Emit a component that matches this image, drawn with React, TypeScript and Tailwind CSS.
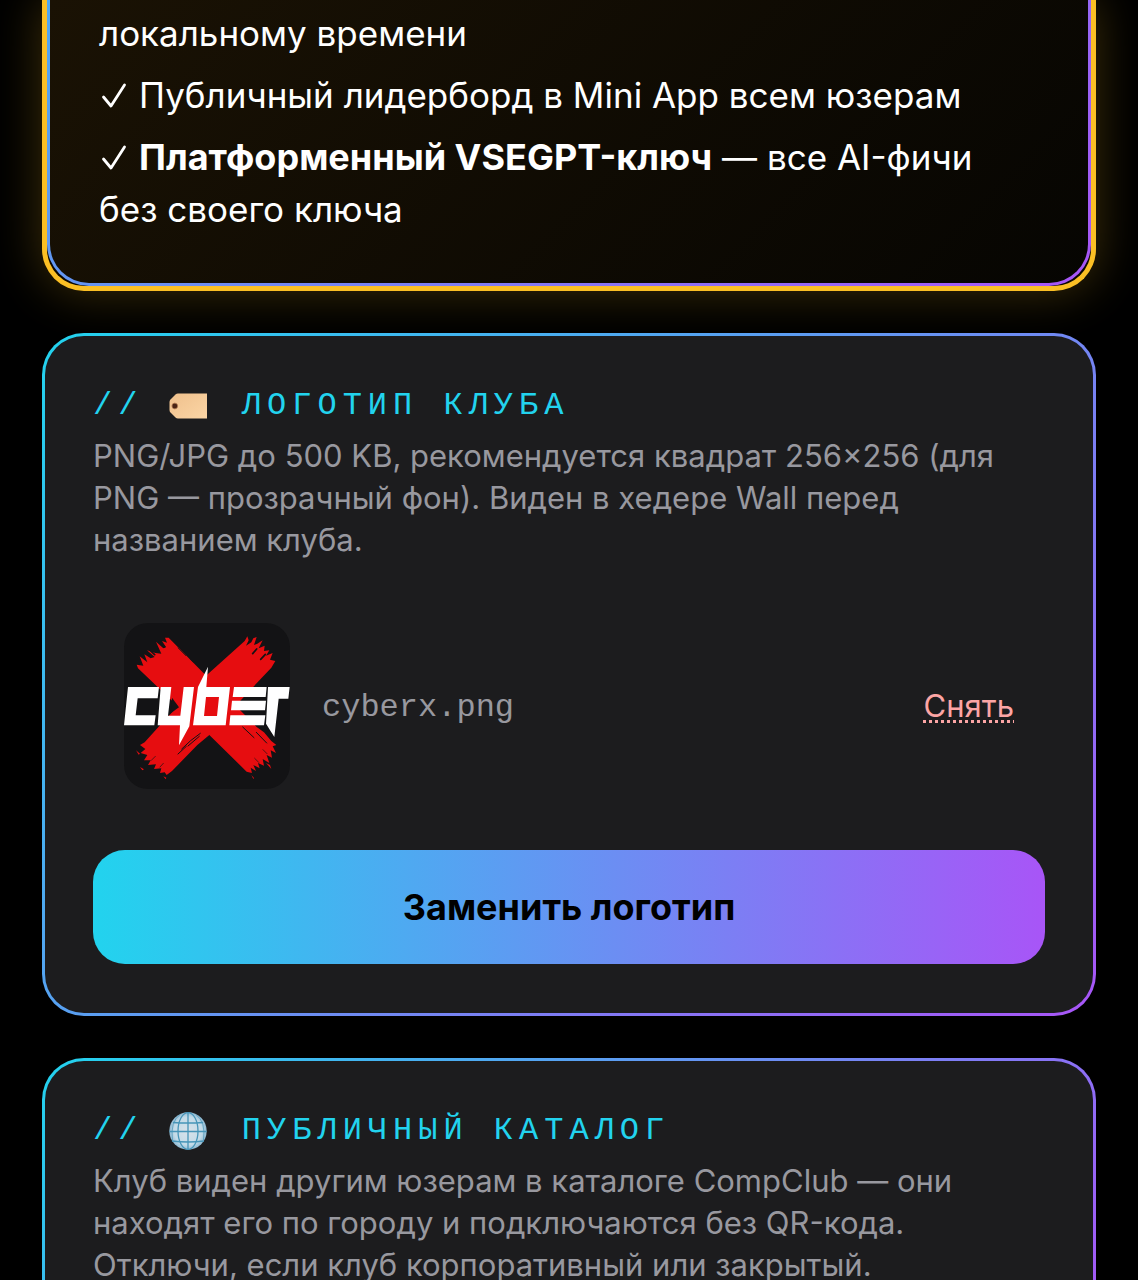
import { FC, ReactNode } from 'react';

const CheckIcon: FC = () => (
  <svg
    viewBox="0 0 28 28"
    className="mr-3 inline-block h-7 w-7 align-baseline"
    fill="none"
    stroke="currentColor"
    strokeWidth="2.8"
    strokeLinecap="round"
    strokeLinejoin="round"
    role="img"
    aria-label="✓"
  >
    <path d="M4.5 17 L12 26 L25.5 5" />
  </svg>
);

const TagIcon: FC = () => (
  <svg viewBox="0 0 38 38" className="h-[38px] w-[38px]" aria-hidden="true">
    <defs>
      <linearGradient id="tag" x1="0" y1="0" x2="1" y2="1">
        <stop offset="0" stopColor="#efc08c" />
        <stop offset="1" stopColor="#fbd5a5" />
      </linearGradient>
    </defs>
    <path
      d="M9 6.5 H38 V31.5 H9 Q7.5 31.5 6.5 30.5 L1.5 25.5 Q.5 24.5 .5 23 V15 Q.5 13.5 1.5 12.5 L6.5 7.5 Q7.5 6.5 9 6.5Z"
      fill="url(#tag)"
    />
    <circle cx="5.8" cy="19" r="2.7" fill="#4a2415" />
    <circle cx="5.8" cy="19" r="2.9" fill="none" stroke="#a9714b" strokeWidth=".7" />
  </svg>
);

const GlobeIcon: FC = () => (
  <svg viewBox="0 0 38 38" className="h-[38px] w-[38px]" aria-hidden="true">
    <defs>
      <radialGradient id="globe">
        <stop offset="0" stopColor="#d9e2ea" />
        <stop offset=".75" stopColor="#c3dbe8" />
        <stop offset="1" stopColor="#8fb9d2" />
      </radialGradient>
    </defs>
    <circle cx="19" cy="19" r="18.7" fill="url(#globe)" />
    <g fill="none" stroke="#4795b8" strokeWidth="1.3">
      <path d="M19 .5 V37.5 M.5 19.5 H37.5 M4 10.5 Q19 11.5 34 10.5 M3 29 Q19 31 35 29" />
      <ellipse cx="19" cy="19" rx="10" ry="18.3" />
      <path d="M11 2.5 Q1 10 3.5 28 M27 2.5 Q37 10 34.5 28" strokeWidth=".7" />
    </g>
  </svg>
);

const ClubLogo: FC = () => (
  <svg
    viewBox="42 38 498 498"
    className="h-[166px] w-[166px] shrink-0 rounded-3xl bg-[#131315]"
    role="img"
    aria-label="Cyber X"
  >
    <g fill="#e60d10">
      {/* brush stroke from top left to bottom right */}
      <path d="M176 82 L440 350 L462 366 L484 392 L499 404 L488 408 L498 428 L482 420 L486 442 L470 434 L478 458 L458 446 L462 466 L444 458 L449 474 L430 464 L438 482 L422 472 L426 488 L410 484 L298 374 L190 275 L84 174 L80 163 L100 166 L89 138 L112 156 L103 132 L122 144 L134 140 L111 120 L136 128 L154 130 L138 94 L160 114 L168 110 L156 92 L171 97 L165 82 Z" />
      {/* brush stroke from top right to bottom left */}
      <path d="M404 92 L412 78 L416 90 L408 106 L424 96 L430 84 L440 80 L432 104 L442 100 L458 90 L446 114 L464 106 L462 122 L478 120 L468 136 L488 128 L480 148 L496 152 L484 172 L391 271 L298 374 L262 404 L186 482 L170 494 L164 486 L150 488 L154 474 L132 476 L138 462 L114 464 L122 450 L102 450 L112 434 L92 428 L106 416 L90 404 L104 396 L150 345 L293 192 Z" />
      <path d="M90 470 l12 7 -5 3z M468 458 l16 18 -4 -12z M160 498 l9 4 -2 5z M424 494 l8 9 -2 3z M78 420 l12 10 -4 3z" />
    </g>
    <g stroke="#131315" strokeLinecap="round" fill="none">
      <path d="M148 94 L164 110 M122 122 L134 133 M440 116 L428 130 M466 132 L452 147" strokeWidth="5" />
      <path d="M215 416 Q241 389 271 369 M234 407 L268 378 M204 431 L229 408 M398 350 L432 382 M439 366 L470 398" strokeWidth="3" />
      <path d="M124 450 L136 438 M150 470 L160 459 M434 444 L446 456 M459 418 L471 430 M204 113 L227 136 M240 146 L249 155" strokeWidth="2" />
    </g>
    <path d="M186 262 L207 291 L182 309 Z" fill="#131315" />
    <g fill="#fff" fillRule="evenodd">
      <path d="M54 230 H147 L143 264 H83 L77 315 H137 L133 345 H42 Z" />
      <path d="M152 230 H184 L174 316 H211 L221 230 H252 L238 348 L207 405 L210 345 H143 Z" />
      <path d="M264 230 L294 169 L289 230 H360 L347 345 H249 Z M288 260 L282 317 H321 L327 260 Z" />
      <path d="M372 230 H470 L467 260 H368 Z M366 271 H468 L465 300 H363 Z M361 315 H466 L462 345 H358 Z" />
      <path d="M474 230 H539 L535 265 H506 L493 380 L468 340 Z" />
    </g>
  </svg>
);

type SectionProps = {
  icon: ReactNode;
  title: string;
  text: string;
  children?: ReactNode;
};

const Section: FC<SectionProps> = ({ icon, title, text, children }) => (
  <section className="mt-[42px] rounded-[42px] bg-[linear-gradient(135deg,#22d3ee,#a855f7)] p-[3px]">
    <div className="rounded-[39px] bg-[#1c1c1e] px-12 pt-[49px] pb-[49px]">
      <h2 className="flex h-[42px] items-center font-['Liberation_Mono',monospace] text-[32px] tracking-[6px] whitespace-pre text-[#22d3ee] uppercase">
        {'// '}
        <span className="mr-[10px]">{icon}</span>
        {' ' + title}
      </h2>
      <p className="mt-2 text-[31px] leading-[42px] text-[#98989f]">{text}</p>
      {children}
    </div>
  </section>
);

const App: FC = () => {
  return (
    <main className="h-screen overflow-hidden bg-black px-[42px] font-[Inter,sans-serif]">
      <section className="rounded-b-[42px] border-x-[5px] border-b-[5px] border-[#fbbf24] bg-[#0c0802] shadow-[0_0_48px_rgba(251,191,36,0.25)]">
        <div className="rounded-b-[42px] bg-[linear-gradient(135deg,#4fa8f2,#a855f7)] px-[3px] pb-[3px]">
          <ul className="space-y-[10px] rounded-b-[39px] bg-[linear-gradient(135deg,#1a1204,#060502)] px-[49px] pt-[7px] pb-12 text-[35px] leading-[52px] text-white">
            <li>локальному времени</li>
            <li>
              <CheckIcon />
              Публичный лидерборд в Mini App всем юзерам
            </li>
            <li>
              <CheckIcon />
              <b className="text-[36px]">Платформенный VSEGPT-ключ</b> — все AI-фичи без своего ключа
            </li>
          </ul>
        </div>
      </section>

      <Section
        icon={<TagIcon />}
        title="Логотип клуба"
        text="PNG/JPG до 500 KB, рекомендуется квадрат 256×256 (для PNG — прозрачный фон). Виден в хедере Wall перед названием клуба."
      >
        <div className="mt-[31px] flex items-center gap-8 p-[31px]">
          <ClubLogo />
          <span className="flex-1 pt-1 font-['Liberation_Mono',monospace] text-[32px] text-[#98989f]">
            cyberx.png
          </span>
          <button className="cursor-pointer text-[31px] text-[#fca5a5] underline decoration-dotted decoration-[3px] underline-offset-[3px]">
            Снять
          </button>
        </div>
        <button className="mt-[30px] w-full cursor-pointer rounded-[32px] bg-[linear-gradient(90deg,#22d3ee,#a855f7)] py-[31px] text-[36px] leading-[52px] font-bold text-black">
          Заменить логотип
        </button>
      </Section>

      <Section
        icon={<GlobeIcon />}
        title="Публичный каталог"
        text="Клуб виден другим юзерам в каталоге CompClub — они находят его по городу и подключаются без QR-кода. Отключи, если клуб корпоративный или закрытый."
      />
    </main>
  );
};

export default App;
